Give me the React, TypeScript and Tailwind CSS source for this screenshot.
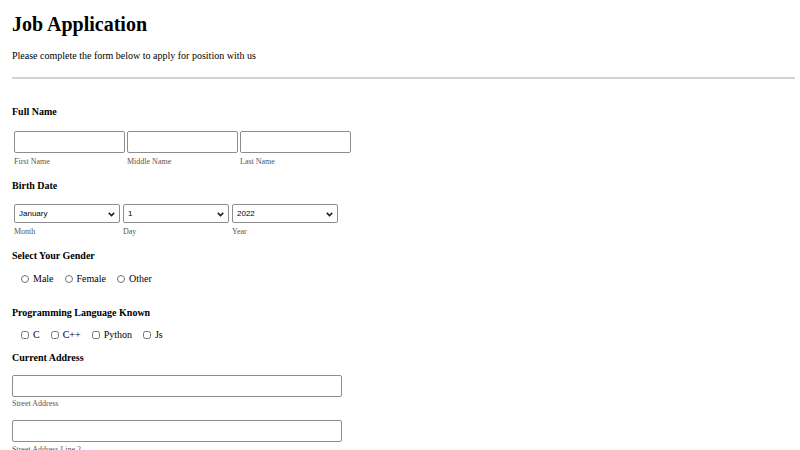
import React from 'react';

const months = ['January', 'February', 'March', 'April', 'May', 'June', 'July', 'August', 'September', 'October', 'November', 'December'];
const days = Array.from({ length: 31 }, (_, i) => String(i + 1));
const years = Array.from({ length: 50 }, (_, i) => String(2022 - i));

const Chevron = () => (
  <svg className="pointer-events-none absolute right-[5px] top-[8px]" width="7" height="5" viewBox="0 0 7 5">
    <path d="M0.8 0.9 L3.5 3.6 L6.2 0.9" fill="none" stroke="#222" strokeWidth="1.6" />
  </svg>
);

const SelectBox = ({ options, sub }: { options: string[]; sub: string }) => (
  <div className="flex flex-col">
    <div className="relative h-[19px]">
      <select className="block appearance-none w-[106px] h-[19px] border border-[#8d8d8d] rounded-[2px] bg-white pl-[4px] text-[8px] leading-[17px] text-black font-['Liberation_Sans',sans-serif] outline-none">
        {options.map(o => <option key={o}>{o}</option>)}
      </select>
      <Chevron />
    </div>
    <span className="mt-[4px] h-[10px] leading-[10px] text-[8px] text-[#555]">{sub}</span>
  </div>
);

const TextBox = ({ sub, w }: { sub: string; w: string }) => (
  <div className="flex flex-col">
    <input type="text" className={`${w} block h-[22px] border border-[#8d8d8d] rounded-[2px] bg-white outline-none`} />
    <span className="mt-[4px] h-[10px] leading-[10px] text-[8px] text-[#555]">{sub}</span>
  </div>
);

const Label = ({ children, mt }: { children: React.ReactNode; mt: string }) => (
  <div className={`${mt} h-[12px] leading-[12px] text-[10px] font-bold`}>{children}</div>
);

export default function App() {
  return (
    <div className="min-h-[450px] bg-white text-black font-['Liberation_Serif',serif] px-[12px] pt-[12px] pr-[5px]">
      <h1 className="h-[24px] leading-[24px] text-[20px] font-bold">Job Application</h1>
      <p className="mt-[14px] h-[12px] leading-[12px] text-[10px]">Please complete the form below to apply for position with us</p>
      <hr className="mt-[15px] border-0 h-[2px] bg-[#d2d2d2]" />

      <Label mt="mt-[27px]">Full Name</Label>
      <div className="mt-[13px] ml-[2px] flex gap-[2px]">
        <TextBox sub="First Name" w="w-[111px]" />
        <TextBox sub="Middle Name" w="w-[111px]" />
        <TextBox sub="Last Name" w="w-[111px]" />
      </div>

      <Label mt="mt-[13px]">Birth Date</Label>
      <div className="mt-[12px] ml-[2px] flex gap-[3px]">
        <SelectBox options={months} sub="Month" />
        <SelectBox options={days} sub="Day" />
        <SelectBox options={years} sub="Year" />
      </div>

      <Label mt="mt-[13px]">Select Your Gender</Label>
      <div className="mt-[11px] pl-[9px] flex items-center gap-[11px] h-[12px] text-[10px]">
        {['Male', 'Female', 'Other'].map(g => (
          <label key={g} className="flex items-center gap-[4px]">
            <input type="radio" name="gender" className="m-0 w-[8px] h-[8px]" />
            <span className="leading-[12px]">{g}</span>
          </label>
        ))}
      </div>

      <Label mt="mt-[22px]">Programming Language Known</Label>
      <div className="mt-[10px] pl-[9px] flex items-center gap-[11px] h-[12px] text-[10px]">
        {['C', 'C++', 'Python', 'Js'].map(l => (
          <label key={l} className="flex items-center gap-[4px]">
            <input type="checkbox" className="m-0 w-[8px] h-[8px]" />
            <span className="leading-[12px]">{l}</span>
          </label>
        ))}
      </div>

      <Label mt="mt-[11px]">Current Address</Label>
      <div className="mt-[11px] flex flex-col">
        <input type="text" className="block w-[330px] h-[22px] border border-[#8d8d8d] rounded-[2px] bg-white outline-none" />
        <span className="mt-[2px] h-[10px] leading-[10px] text-[8px] text-[#555]">Street Address</span>
        <input type="text" className="block mt-[11px] w-[330px] h-[22px] border border-[#8d8d8d] rounded-[2px] bg-white outline-none" />
        <span className="mt-[3px] h-[10px] leading-[10px] text-[8px] text-[#555]">Street Address Line 2</span>
      </div>
    </div>
  );
}
